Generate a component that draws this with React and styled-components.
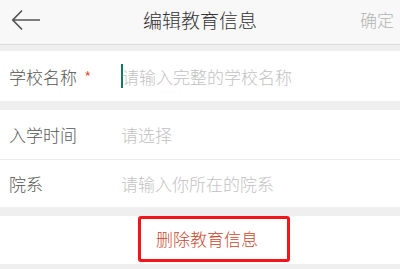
import React from 'react';
import styled, { createGlobalStyle } from 'styled-components';

const GlobalStyle = createGlobalStyle`
  html, body {
    margin: 0;
    padding: 0;
    background: #efefef;
    font-family: "Noto Sans CJK SC", "Noto Sans", sans-serif;
  }
`;

const Page = styled.div`
  width: 400px;
  min-height: 269px;
  background: #efefef;
`;

const Header = styled.div`
  height: 45px;
  box-sizing: border-box;
  display: flex;
  align-items: center;
  justify-content: space-between;
  padding: 0 6px 0 11px;
  background: #f8f8f8;
  border-bottom: 1px solid #dcdcdc;
  position: relative;
`;

const BackButton = styled.button`
  border: none;
  background: none;
  padding: 0;
  display: flex;
  align-items: center;
  margin-top: -4px;
`;

const Title = styled.div`
  position: absolute;
  left: 0;
  right: 0;
  top: 0;
  bottom: 0;
  display: flex;
  align-items: center;
  justify-content: center;
  font-size: 19px;
  font-weight: 300;
  color: #333;
  margin-top: -5px;
  pointer-events: none;
`;

const Confirm = styled.div`
  font-size: 17px;
  font-weight: 300;
  color: #b4b4b4;
  margin-top: -5px;
`;

const Gap = styled.div`
  height: ${(props) => props.h}px;
`;

const Group = styled.div`
  background: #fff;
`;

const Row = styled.div`
  height: ${(props) => props.h}px;
  display: flex;
  align-items: center;
  padding-left: 9px;
  border-bottom: ${(props) => (props.divider ? '1px solid #ededed' : 'none')};
`;

const Label = styled.div`
  width: 112px;
  font-size: 17px;
  font-weight: 300;
  color: #555;
  display: flex;
  align-items: center;
`;

const Star = styled.span`
  color: #e0432b;
  font-size: 17px;
  margin-left: 7px;
  margin-top: 1px;
`;

const Field = styled.div`
  display: flex;
  align-items: center;
  font-size: 17px;
  font-weight: 300;
  color: #c2c2c2;
`;

const Cursor = styled.span`
  display: inline-block;
  width: 2px;
  height: 24px;
  background: #0f7a5c;
  margin-right: -1px;
`;

const ButtonArea = styled.div`
  height: 48px;
  background: #fff;
  display: flex;
  align-items: flex-start;
  padding-left: 138px;
`;

const DeleteButton = styled.button`
  width: 152px;
  height: 46px;
  box-sizing: border-box;
  border: 3px solid #f5141a;
  border-radius: 3px;
  background: #fff;
  color: #c9472e;
  font-family: "Noto Sans CJK SC", "Noto Sans", sans-serif;
  font-size: 17px;
  font-weight: 300;
  padding: 0 14px 2px 0;
  display: flex;
  align-items: center;
  justify-content: center;
`;

const rows = [
  { label: '入学时间', hint: '请选择', h: 49, divider: true },
  { label: '院系', hint: '请输入你所在的院系', h: 47 },
];

export default function App() {
  return (
    <Page>
      <GlobalStyle />
      <Header>
        <BackButton type="button">
          <svg width="30" height="22" viewBox="0 0 30 22">
            <path d="M29 11H2M11 1.5L1.8 11L11 20.5" fill="none" stroke="#555" strokeWidth="1.7" />
          </svg>
        </BackButton>
        <Title>编辑教育信息</Title>
        <Confirm>确定</Confirm>
      </Header>
      <Gap h={6} />
      <Group>
        <Row h={50}>
          <Label>
            学校名称
            <Star>*</Star>
          </Label>
          <Field>
            <Cursor />
            请输入完整的学校名称
          </Field>
        </Row>
      </Group>
      <Gap h={9} />
      <Group>
        {rows.map((r) => (
          <Row key={r.label} h={r.h} divider={r.divider}>
            <Label>{r.label}</Label>
            <Field>{r.hint}</Field>
          </Row>
        ))}
      </Group>
      <Gap h={9} />
      <ButtonArea>
        <DeleteButton type="button">删除教育信息</DeleteButton>
      </ButtonArea>
    </Page>
  );
}
